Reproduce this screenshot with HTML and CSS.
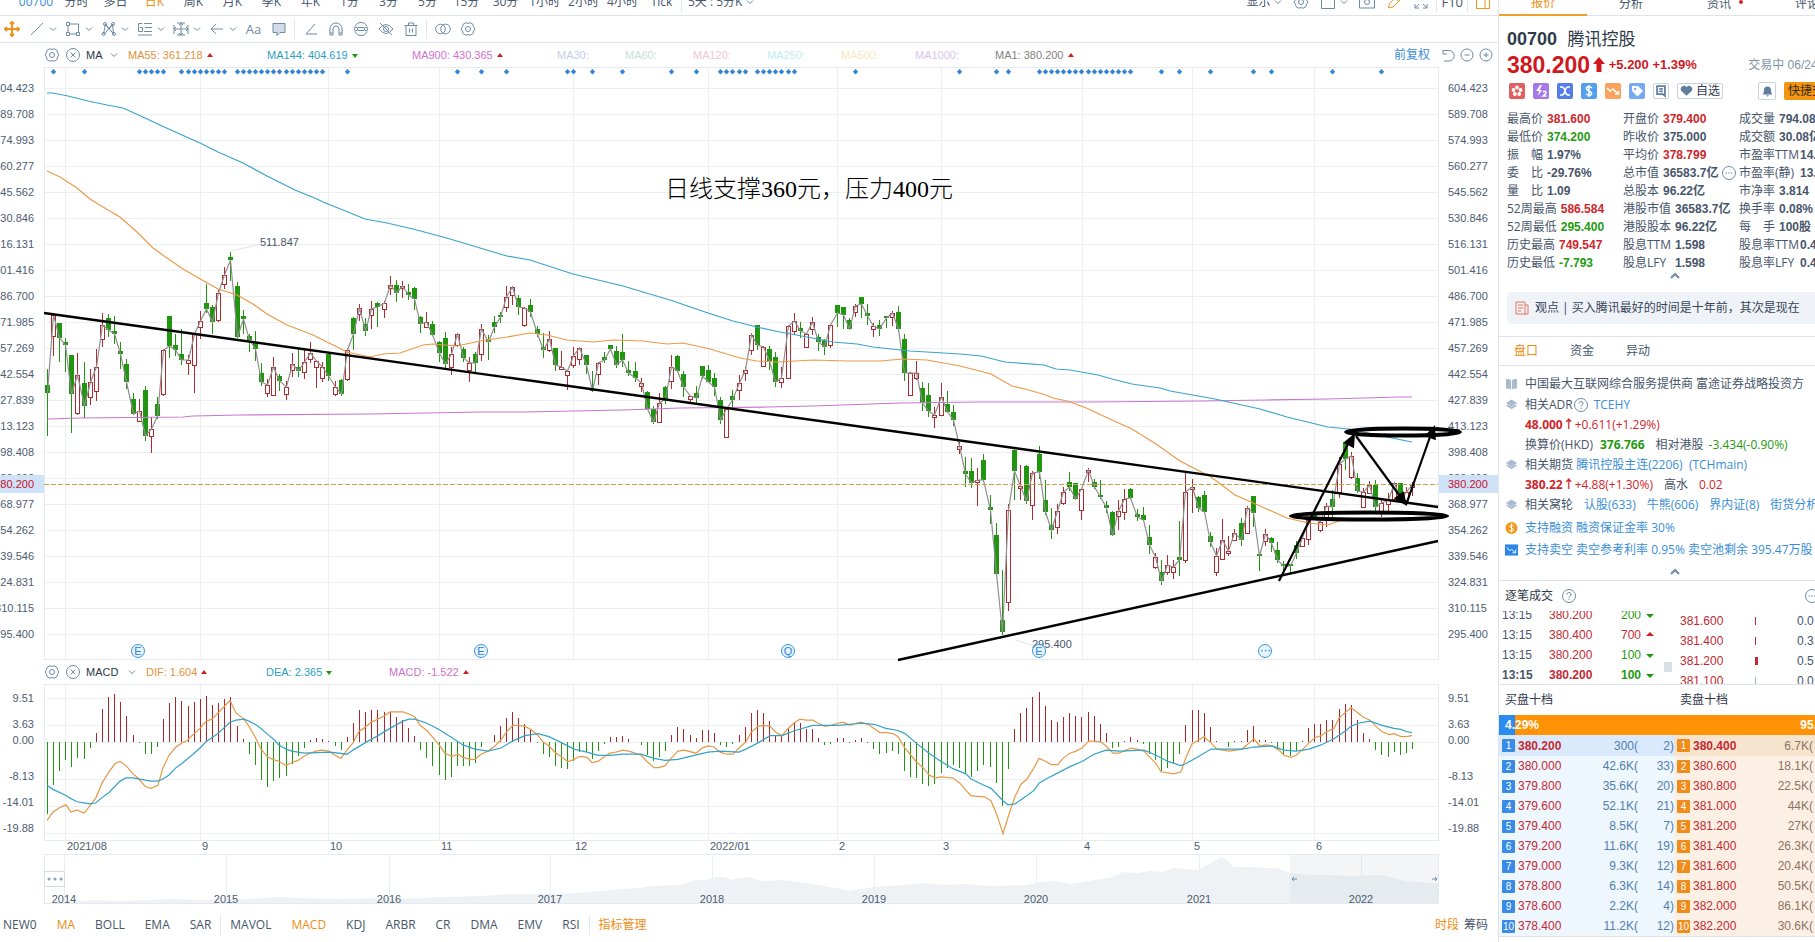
FILE: index.html
```html
<!DOCTYPE html>
<html lang="zh-CN">
<head>
    <meta charset="UTF-8">
    <meta name="viewport" content="width=device-width, initial-scale=1.0">
    <title>00700 腾讯控股</title>
    <link rel="stylesheet" href="styles.css">
</head>
<body>
    <!-- icon sprite -->
    <svg class="sprite" aria-hidden="true">
        <symbol id="chev" viewBox="0 0 8 8"><path d="M1 2.5l3 3 3-3"/></symbol>
        <symbol id="chev-up" viewBox="0 0 10 8"><path d="M1 6l4-4 4 4"/></symbol>
        <symbol id="gear" viewBox="0 0 16 16"><path d="M5.8 1.8Q8 3 10.200 1.800L13 3.400Q13 6 15 8 13 10 13 12.600L10.200 14.200Q8 13 5.800 14.200L3 12.600Q3 10 1 8 3 6 3 3.400Z"/><circle cx="8" cy="8" r="2.500"/></symbol>
        <symbol id="close" viewBox="0 0 16 16"><circle cx="8" cy="8" r="6.500"/><path d="M5.700 5.700l4.600 4.600M10.300 5.700l-4.600 4.600"/></symbol>
        <symbol id="minus" viewBox="0 0 16 16"><circle cx="8" cy="8" r="6"/><path d="M5.500 8h5"/></symbol>
        <symbol id="plus" viewBox="0 0 16 16"><circle cx="8" cy="8" r="6"/><path d="M5.500 8h5M8 5.500v5"/></symbol>
        <symbol id="undo" viewBox="0 0 16 16"><path d="M3 3v4h4M3 3.500h6a5 5 0 0 1 0 10.500H4"/></symbol>
        <symbol id="help" viewBox="0 0 16 16"><circle cx="8" cy="8" r="6.500"/><path d="M6 6.500a2 2 0 1 1 2.800 1.800Q8 8.700 8 9.700M8 11v1"/></symbol>
        <symbol id="more" viewBox="0 0 16 16"><circle cx="8" cy="8" r="6.500"/><path d="M4.500 8h1.500M7.300 8h1.500M10 8h1.500"/></symbol>
        <symbol id="layers" viewBox="0 0 14 14"><path class="fill" d="M7 1l6 3.800-6 3.700-6-3.700z"/><path class="fill" d="M1 7.500l2-1 4 2.500 4-2.500 2 1-6 4z"/></symbol>
    </svg>

    <div class="app">
        <main class="main">
            <nav class="periods">
                <div class="periods-inner">
                    <button class="code">00700</button>
                    <button>分时</button>
                    <button>多日</button>
                    <button class="active">日K</button>
                    <button>周K</button>
                    <button>月K</button>
                    <button>季K</button>
                    <button>年K</button>
                    <button>1分</button>
                    <button>3分</button>
                    <button>5分</button>
                    <button>15分</button>
                    <button>30分</button>
                    <button>1小时</button>
                    <button>2小时</button>
                    <button>4小时</button>
                    <button>Tick</button>
                    <button class="custom">5天 : 5分K <svg class="icon small"><use href="#chev"/></svg></button>
                    <div class="window-tools">
                        <button>显示 <svg class="icon small"><use href="#chev"/></svg></button>
                        <button aria-label="设置"><svg class="icon" viewBox="0 0 16 16"><use href="#gear"/></svg></button>
                        <button aria-label="布局"><svg class="icon" viewBox="0 0 16 16"><path d="M1.500 1.500h13v13h-13z"/></svg> <svg class="icon small"><use href="#chev"/></svg></button>
                        <button aria-label="截图"><svg class="icon" viewBox="0 0 16 16"><path d="M.5 3h15v11H.5zM5 3l1-2h4l1 2"/><circle cx="8" cy="8" r="2.500"/></svg></button>
                        <button aria-label="画线"><svg class="icon orange" viewBox="0 0 16 16"><path d="M2.500 14l1-4.500 8-8 3.500 3.500-8 8zM9 4l3.500 3.500"/></svg></button>
                        <button aria-label="全屏"><svg class="icon" viewBox="0 0 16 16"><path d="M2 10v4h4M2 14l4-4M14 10v4h-4M14 14l-4-4M2 5V1h4M14 5V1h-4"/></svg></button>
                        <button class="f10">F10</button>
                        <button aria-label="侧栏"><svg class="icon orange" viewBox="0 0 16 16"><path d="M1.500 1.500h13v13h-13zM10 1v13"/></svg></button>
                    </div>
                </div>
            </nav>

            <div class="toolbar">
                <button aria-label="移动"><svg class="icon orange bold" viewBox="0 0 16 16"><path d="M8 1v14M1 8h14M6 3l2-2 2 2M6 13l2 2 2-2M3 6L1 8l2 2M13 6l2 2-2 2"/></svg></button>
                <button class="drop" aria-label="线段"><svg class="icon" viewBox="0 0 16 16"><path d="M2 14L14 2"/></svg><svg class="icon small"><use href="#chev"/></svg></button>
                <button class="drop" aria-label="矩形"><svg class="icon" viewBox="0 0 16 16"><path d="M4.500 3h9v8.500M4.500 13h7M3 4.500v7M1.500 1.500h3v3h-3zM11.500 11.500h3v3h-3zM1.500 11.500h3v3h-3z"/></svg><svg class="icon small"><use href="#chev"/></svg></button>
                <button class="drop" aria-label="形态"><svg class="icon" viewBox="0 0 16 16"><path d="M2.500 13l2-10 8 10-1-10-8 10M4 3l4 5 4-5"/><circle cx="4" cy="3" r="1.500"/><circle cx="12" cy="3" r="1.500"/><circle cx="2.500" cy="13" r="1.500"/><circle cx="13" cy="13" r="1.500"/></svg><svg class="icon small"><use href="#chev"/></svg></button>
                <button class="drop" aria-label="斐波那契"><svg class="icon" viewBox="0 0 16 16"><path d="M7 2.500h8M8 6.500h7M7 10.500h8M1 14h14M5.500 2.500H1.500v8h4v-4H3"/></svg><svg class="icon small"><use href="#chev"/></svg></button>
                <button class="drop" aria-label="测量"><svg class="icon" viewBox="0 0 16 16"><path d="M1 4v9M15 4v9M4 2h8M4 14h8M8 2v12M1 8h14M3 6L1 8l2 2M13 6l2 2-2 2M6 4l2-2 2 2M6 12l2 2 2-2"/></svg><svg class="icon small"><use href="#chev"/></svg></button>
                <button class="drop" aria-label="箭头"><svg class="icon" viewBox="0 0 16 16"><path d="M14 8H2M7 3L2 8l5 5"/></svg><svg class="icon small"><use href="#chev"/></svg></button>
                <button class="letters">Aa</button>
                <button class="tool" aria-label="批注"><svg class="icon shaded" viewBox="0 0 16 16"><path d="M2 2.500h12v9H9L6 14.500v-3H2z"/></svg></button>
                <span class="sep"></span>
                <button class="tool" aria-label="角度"><svg class="icon" viewBox="0 0 16 16"><path d="M12 3l-9 10h11"/></svg></button>
                <button class="tool" aria-label="磁铁"><svg class="icon" viewBox="0 0 16 16"><path d="M2 14V8a6 6 0 0 1 12 0v6h-3V8a3 3 0 0 0-6 0v6zM2 12h3M11 12h3"/></svg></button>
                <button class="tool" aria-label="同步"><svg class="icon" viewBox="0 0 16 16"><path d="M2 5.500a6.500 6.500 0 0 1 12 0M2 10.500a6.500 6.500 0 0 0 12 0M5 6.500h6M5 9.500h6"/><circle cx="3" cy="8" r="1.800"/><circle cx="13" cy="8" r="1.800"/></svg></button>
                <button class="tool" aria-label="隐藏"><svg class="icon" viewBox="0 0 16 16"><path d="M1 8q7-9 14 0-7 9-14 0M2 2l12 12"/><circle cx="8" cy="8" r="2.500"/></svg></button>
                <button class="tool" aria-label="删除"><svg class="icon" viewBox="0 0 16 16"><path d="M1.500 4.500h13M3 4.500v10h10v-10M5.500 4V2h5v2M6.500 7.500v4M9.500 7.500v4"/></svg></button>
                <span class="sep"></span>
                <button class="tool" aria-label="对比"><svg class="icon" viewBox="0 0 16 16"><circle cx="5.500" cy="8" r="4.800"/><circle cx="10.500" cy="8" r="4.800"/></svg></button>
                <button class="tool" aria-label="设置"><svg class="icon"><use href="#gear"/></svg></button>
            </div>

            <div class="indicator">
                <svg class="icon"><use href="#gear"/></svg>
                <svg class="icon"><use href="#close"/></svg>
                <span class="ind-name">MA</span>
                <svg class="icon small"><use href="#chev"/></svg>
                <div class="legend ma">
                    <span class="c-orange">MA55: 361.218<i class="tri up"></i></span>
                    <span class="c-cyan">MA144: 404.619<i class="tri down"></i></span>
                    <span class="c-pink">MA900: 430.365<i class="tri up"></i></span>
                    <span class="c-ma30">MA30:</span>
                    <span class="c-ma60">MA60:</span>
                    <span class="c-ma120">MA120:</span>
                    <span class="c-ma250">MA250:</span>
                    <span class="c-ma500">MA500:</span>
                    <span class="c-ma1000">MA1000:</span>
                    <span class="c-gray">MA1: 380.200<i class="tri up"></i></span>
                </div>
                <a class="adjust" href="#">前复权</a>
                <svg class="icon"><use href="#undo"/></svg>
                <svg class="icon"><use href="#minus"/></svg>
                <svg class="icon"><use href="#plus"/></svg>
            </div>

            <section class="chart price-chart">
                <div class="axis left" id="axisLeft"></div>
                <div class="plot" id="pricePlot">
                    <svg id="priceSvg" viewBox="44 67 1394 593" preserveAspectRatio="none"></svg>
                </div>
                <div class="axis right" id="axisRight"></div>
            </section>

            <div class="indicator macd-head">
                <svg class="icon"><use href="#gear"/></svg>
                <svg class="icon"><use href="#close"/></svg>
                <span class="ind-name">MACD</span>
                <svg class="icon small"><use href="#chev"/></svg>
                <div class="legend macd">
                    <span class="c-orange">DIF: 1.604<i class="tri up"></i></span>
                    <span class="c-cyan">DEA: 2.365<i class="tri down"></i></span>
                    <span class="c-pink">MACD: -1.522<i class="tri up"></i></span>
                </div>
            </div>

            <section class="chart macd-chart">
                <div class="axis left">
                    <span>9.51</span><span>3.63</span><span class="zero">0.00</span><span>-8.13</span><span>-14.01</span><span>-19.88</span>
                </div>
                <div class="plot">
                    <svg id="macdSvg" viewBox="44 684 1394 152" preserveAspectRatio="none"></svg>
                </div>
                <div class="axis right">
                    <span>9.51</span><span>3.63</span><span class="zero">0.00</span><span>-8.13</span><span>-14.01</span><span>-19.88</span>
                </div>
            </section>

            <div class="chart dates">
                <div></div>
                <div class="plot" id="months"></div>
            </div>

            <div class="chart navigator">
                <div></div>
                <div class="plot" id="nav">
                    <svg id="navSvg" viewBox="44 854 1394 50" preserveAspectRatio="none"></svg>
                    <button class="nav-more" aria-label="更多"><svg viewBox="0 0 19 14"><circle cx="4" cy="7" r="1.500"/><circle cx="10" cy="7" r="1.500"/><circle cx="16" cy="7" r="1.500"/></svg></button>
                </div>
            </div>

            <footer class="bottom-tabs">
                <button>NEW0</button>
                <button class="active">MA</button>
                <button>BOLL</button>
                <button>EMA</button>
                <button>SAR</button>
                <span class="sep"></span>
                <button>MAVOL</button>
                <button class="active">MACD</button>
                <button>KDJ</button>
                <button>ARBR</button>
                <button>CR</button>
                <button>DMA</button>
                <button>EMV</button>
                <button>RSI</button>
                <span class="sep"></span>
                <button class="active">指标管理</button>
                <div class="right-tabs">
                    <button class="active">时段</button>
                    <button>筹码</button>
                </div>
            </footer>
        </main>

        <aside class="side">
            <div class="side-inner">
                <nav class="side-tabs">
                    <button class="active"><span>报价</span></button>
                    <button><span>分析</span></button>
                    <button><span class="dot">资讯</span></button>
                    <button><span>评论</span></button>
                </nav>

                <header class="quote">
                    <h1><b>00700</b> 腾讯控股</h1>
                    <div class="price-line">
                        <span class="last">380.200</span>
                        <svg class="arrow" viewBox="0 0 12 16"><path d="M6 0l6 7H8.500v8h-5V7H0z"/></svg>
                        <span class="change">+5.200 +1.39%</span>
                        <span class="status">交易中 06/24 13:15</span>
                    </div>
                    <div class="badges">
                        <svg class="b-red" viewBox="0 0 16 16"><circle cx="8" cy="4.500" r="1.900"/><circle cx="11.500" cy="7" r="1.900"/><circle cx="10.200" cy="11" r="1.900"/><circle cx="5.800" cy="11" r="1.900"/><circle cx="4.500" cy="7" r="1.900"/></svg>
                        <svg class="b-purple" viewBox="0 0 16 16"><path d="M7 2L3 8h3l-1 5 4-6H6.500L9 2z"/><path class="line" d="M10 9q3-1.500 3 .500 0 1-3 3.500h3.500"/></svg>
                        <svg class="b-blue" viewBox="0 0 16 16"><path class="line" d="M3 4h2c4 0 2 8 6 8h2M3 12h2c4 0 2-8 6-8h2"/></svg>
                        <svg class="b-sky" viewBox="0 0 16 16"><path class="line" d="M11 5q-3-2.500-5.500-.500Q5 7 8 8t2.500 3.500Q8 13 5 11M8 2v12"/></svg>
                        <svg class="b-orange" viewBox="0 0 16 16"><path class="line" d="M2 5l3 3 3-2 5 5M10 11h3.500V8"/></svg>
                        <svg class="b-light" viewBox="0 0 16 16"><path d="M3 3h6l5 5-5.500 5.500L3 8z"/><circle class="hole" cx="6" cy="6" r="1.200"/></svg>
                        <svg class="b-note" viewBox="0 0 16 16"><path d="M3.500 2.500h9v11L10 11.500H3.500zM6 5.500h4M6 8.500h4"/></svg>
                        <button class="fav"><svg viewBox="0 0 14 12"><path d="M7 11L1.500 6A3 3 0 0 1 7 2a3 3 0 0 1 5.500 4z"/></svg>自选</button>
                        <button class="bell" aria-label="提醒"><svg viewBox="0 0 12 12"><path d="M1 9.500q1.500-1 1.500-4.500a3.500 3.500 0 0 1 7 0Q9.500 8.500 11 9.500zM4.500 10.300h3L6 11.800z"/></svg></button>
                        <button class="trade">快捷交易</button>
                    </div>
                </header>

                <div class="stats" id="stats"></div>
                <button class="fold" aria-label="收起"><svg class="icon"><use href="#chev-up"/></svg></button>

                <a class="banner" href="#"><svg viewBox="0 0 14 14"><path d="M1 1h9v12H1zM10 4h3v9h-3M3 4h5M3 7h5M3 10h3"/></svg>观点 | 买入腾讯最好的时间是十年前，其次是现在</a>

                <nav class="sub-tabs">
                    <button class="active">盘口</button>
                    <button>资金</button>
                    <button>异动</button>
                </nav>

                <ul class="info">
                    <li class="first"><svg viewBox="0 0 14 14"><path class="fill" d="M1 2q3-1 5.500 1v10Q4 11.500 1 12zM13 2q-3-1-5.500 1v10q2.500-1.500 5.500-1z"/></svg>中国最大互联网综合服务提供商 富途证券战略投资方</li>
                    <li><svg><use href="#layers"/></svg>相关ADR<svg class="icon"><use href="#help"/></svg><a class="near" href="#">TCEHY</a></li>
                    <li class="indent red"><b>48.000↑</b>+0.611(+1.29%)</li>
                    <li class="indent">换算价(HKD)<b class="green mid">376.766</b><span class="wide">相对港股</span><span class="green near">-3.434(-0.90%)</span></li>
                    <li><svg><use href="#layers"/></svg>相关期货 <a href="#">腾讯控股主连(2206)&nbsp; (TCHmain)</a></li>
                    <li class="indent red"><b>380.22↑</b>+4.88(+1.30%)<span class="wide dark">高水</span><span class="wide">0.02</span></li>
                    <li><svg><use href="#layers"/></svg>相关窝轮<a class="wide" href="#">认股(633)</a><a class="wide" href="#">牛熊(606)</a><a class="wide" href="#">界内证(8)</a><a class="wide" href="#">街货分析</a></li>
                    <li class="tall"><svg viewBox="0 0 14 14"><circle class="coin" cx="7" cy="7" r="6.500"/><path class="white" d="M9.500 5Q8 3.500 6 4.300 4 6 7 7t2 2.700Q7 11 4.500 9.500M7 2v10"/></svg><a href="#">支持融资 融资保证金率 30%</a></li>
                    <li><svg viewBox="0 0 14 14"><path class="box" d="M0 1h14v12H0z"/><path class="white" d="M2 4l3 4 2-2 4 4M8 10h3.500V6.500"/></svg><a href="#">支持卖空 卖空参考利率 0.95% 卖空池剩余 395.47万股</a></li>
                </ul>
                <button class="fold info-fold" aria-label="收起"><svg class="icon"><use href="#chev-up"/></svg></button>

                <h2 class="tick-title">逐笔成交 <svg class="icon"><use href="#help"/></svg><svg class="icon last-icon"><use href="#more"/></svg></h2>
                <div class="ticks">
                    <table class="tick-list">
                        <tr><td>13:15</td><td class="p">380.200</td><td class="q">200</td><td><i class="tri down"></i></td></tr>
                        <tr><td>13:15</td><td class="p">380.400</td><td class="q rise">700</td><td><i class="tri up"></i></td></tr>
                        <tr><td>13:15</td><td class="p">380.200</td><td class="q">100</td><td><i class="tri down"></i></td></tr>
                        <tr class="latest"><td>13:15</td><td class="p">380.200</td><td class="q">100</td><td><i class="tri down"></i></td></tr>
                    </table>
                    <span class="thumb"></span>
                    <table class="level-list">
                        <tr><td class="p">381.600</td><td><i class="vol"></i></td><td>0.0</td></tr>
                        <tr><td class="p">381.400</td><td><i class="vol"></i></td><td>0.3</td></tr>
                        <tr><td class="p">381.200</td><td><i class="vol big"></i></td><td>0.5</td></tr>
                        <tr><td class="p">381.100</td><td><i class="vol flat"></i></td><td>0.0</td></tr>
                    </table>
                </div>

                <div class="depth-head"><span>买盘十档</span><span>卖盘十档</span></div>
                <div class="ratio"><span class="buy"></span><b>4.29%</b><b class="sell">95.71%</b></div>
                <div class="depth">
                    <table class="bids" id="bids"></table>
                    <table class="asks" id="asks"></table>
                </div>
            </div>
        </aside>
    </div>

    <script src="script.js"></script>
</body>
</html>
```
FILE: styles.css
```css
* {
    box-sizing: border-box;
}

body {
    margin: 0;
    font-family: "Open Sans", "Noto Sans CJK SC", sans-serif;
    font-size: 12px;
    line-height: 20px;
    color: #47566b;
    background: #fff;
}

button {
    padding: 0;
    border: none;
    background: none;
    font: inherit;
    color: inherit;
    white-space: nowrap;
    cursor: pointer;
}

a {
    color: #3a8ed6;
    text-decoration: none;
}

table {
    border-collapse: collapse;
}

td {
    padding: 0;
}

.sprite {
    display: none;
}

.icon {
    width: 16px;
    height: 16px;
    fill: none;
    stroke: #6f8aa5;
    stroke-width: 1;
    flex: none;
}

.icon.small {
    width: 8px;
    height: 8px;
}

.icon.orange {
    stroke: #f0931a;
}

.icon.bold {
    stroke-width: 2;
}

.icon.shaded {
    fill: #d3dce8;
}

.active {
    color: #ee8d13;
}

.red {
    color: #d0262b;
}

.green {
    color: #1f9a10;
}

.app {
    display: flex;
    min-height: 100vh;
    overflow: hidden;
}

.main {
    flex: 1;
    min-width: 0;
}

/* top period bar, scrolled half out of view */
.periods {
    height: 16px;
    overflow: hidden;
    border-bottom: 1px solid #dfe4ea;
}

.periods-inner {
    display: flex;
    height: 28px;
    margin-top: -12px;
    padding-left: 15px;
    align-items: center;
}

.periods-inner > button {
    width: 39px;
    flex: none;
}

.periods-inner > .code {
    width: 42px;
    color: #3a8ed6;
}

.periods-inner > .custom {
    width: auto;
    padding-left: 6px;
    border-left: 1px solid #e3e7ec;
}

.window-tools {
    display: flex;
    gap: 11px;
    margin-left: auto;
    padding-right: 7px;
}

.window-tools button {
    display: flex;
    align-items: center;
    gap: 4px;
}

.window-tools .f10 {
    margin: 0 -4px;
    padding: 0 4px;
    border-left: 1px solid #e3e7ec;
    border-right: 1px solid #e3e7ec;
    font-size: 13px;
}

.toolbar {
    display: flex;
    align-items: center;
    height: 27px;
    padding-left: 4px;
    border-bottom: 1px solid #dfe4ea;
}

.toolbar button {
    display: flex;
    align-items: center;
    justify-content: center;
}

.toolbar .drop {
    width: 36px;
    gap: 4px;
}

.toolbar button:first-child {
    margin-right: 5px;
}

.toolbar .letters {
    width: 25px;
    font-size: 13px;
    color: #6f8aa5;
}

.toolbar .tool {
    width: 25px;
}

.sep {
    width: 1px;
    height: 20px;
    margin: 0 3px;
    background: #e3e7ec;
}

/* indicator header rows */
.indicator {
    display: flex;
    align-items: center;
    height: 24px;
    padding: 0 1px 0 44px;
    font-family: "Liberation Sans", "Noto Sans CJK SC", sans-serif;
    font-size: 11px;
}

.indicator .icon {
    margin-right: 5px;
}

.indicator .icon.small {
    margin-right: 10px;
}

.indicator .adjust ~ .icon {
    margin-right: 3px;
}

.ind-name {
    width: 24px;
    color: #2b3747;
}

.macd-head .ind-name {
    width: 42px;
}

.legend {
    display: grid;
    flex: 1;
    white-space: nowrap;
}

.legend.ma {
    grid-template-columns: 139px 145px 145px 68px 68px 74px 74px 74px 80px 1fr;
}

.legend.macd {
    grid-template-columns: 120px 123px 1fr;
}

.adjust {
    margin-right: 10px;
    font-size: 12px;
}

.tri {
    display: inline-block;
    margin-left: 4px;
    vertical-align: middle;
    border: 3px solid transparent;
}

.tri.up {
    margin-bottom: 3px;
    border-top: none;
    border-bottom: 4px solid #cc2020;
}

.tri.down {
    border-bottom: none;
    border-top: 4px solid #1f9a10;
}

.c-orange { color: #e2913a; }
.c-cyan { color: #2c9fc0; }
.c-pink { color: #d070cf; }
.c-ma30 { color: #c5cfe9; }
.c-ma60 { color: #bfe3d0; }
.c-ma120 { color: #f5c6cb; }
.c-ma250 { color: #bdeeee; }
.c-ma500 { color: #f6e8bc; }
.c-ma1000 { color: #d9c2ef; }
.c-gray { color: #857f7c; }

/* charts */
.chart {
    display: grid;
    grid-template-columns: 44px 1fr 60px;
    font-family: "Liberation Sans", sans-serif;
    font-size: 11px;
}

.plot {
    position: relative;
    z-index: 1;
    min-width: 0;
}

.plot > svg {
    display: block;
    position: absolute;
    width: 100%;
    height: 100%;
    overflow: visible;
}

.axis {
    display: flex;
    position: relative;
    flex-direction: column;
    line-height: 26px;
    color: #4d5c70;
}

.axis.left {
    align-items: flex-end;
    padding-right: 10px;
}

.axis.right {
    padding-left: 10px;
}

.price-chart .axis {
    padding-top: 8px;
    padding-bottom: 13px;
}

.price-tag {
    position: absolute;
    top: 408px;
    left: 0;
    right: 0;
    display: flex;
    justify-content: flex-end;
    height: 18px;
    padding: 0 10px;
    line-height: 18px;
    color: #c8102e;
    background: #cfe2f8;
}

.right .price-tag {
    justify-content: flex-start;
}

.mark {
    position: absolute;
    line-height: 14px;
    white-space: nowrap;
    transform: translateY(-50%);
}

.note {
    font-family: "Liberation Serif", "Noto Sans CJK SC", serif;
    font-size: 24px;
    font-weight: 300;
    line-height: 32px;
    color: #000;
}

.event {
    width: 14px;
    height: 14px;
    margin-left: -7px;
    border: 1px solid #3b95dc;
    border-radius: 50%;
    line-height: 12px;
    text-align: center;
    color: #2c86d0;
    background: #e6f4fe;
}

.macd-chart {
    height: 152px;
}

.macd-chart .axis {
    padding-top: 1px;
}

.axis .zero {
    margin-bottom: 20px;
    line-height: 6px;
}

.dates {
    height: 18px;
    color: #4d5c70;
}

.dates .mark {
    margin-left: 2px;
}

.navigator {
    height: 50px;
    color: #4d5c70;
}

.navigator .mark {
    transform: translate(-50%, -50%);
}

.nav-more {
    position: absolute;
    top: 17px;
    left: 0;
    width: 21px;
    height: 16px;
    border: 1px solid #d3dae2;
    background: #fff;
}

.nav-more svg {
    display: block;
    fill: #8ea1b5;
}

.bottom-tabs {
    display: flex;
    align-items: center;
    height: 38px;
    padding: 4px 10px 0 3px;
    gap: 20px;
}

.bottom-tabs .sep {
    margin: 0 -11px;
}

.right-tabs {
    display: flex;
    gap: 5px;
    margin-left: auto;
}

/* quote panel, wider than what the window shows */
.side {
    flex: 0 0 317px;
    overflow: hidden;
    border-left: 1px solid #dfe4ea;
}

.side-inner {
    width: 352px;
}

.side-tabs {
    display: flex;
    height: 16px;
    border-bottom: 1px solid #dfe4ea;
}

.side-tabs button {
    flex: 1;
    height: 16px;
    overflow: hidden;
}

.side-tabs .active {
    border-bottom: 2px solid #eea02e;
}

.side-tabs span {
    display: block;
    margin-top: -8px;
}

.side-tabs .dot::after {
    content: "";
    display: inline-block;
    width: 4px;
    height: 4px;
    margin: 0 -12px 4px 8px;
    border-radius: 50%;
    background: #d0262b;
}

.quote {
    padding: 11px 0 0 8px;
}

.quote h1 {
    margin: 0;
    font-size: 17px;
    font-weight: 400;
    line-height: 24px;
    color: #2f3a4a;
}

.quote h1 b {
    margin-right: 6px;
    font-family: "Liberation Sans", sans-serif;
    font-size: 18px;
}

.price-line {
    display: flex;
    align-items: center;
    height: 28px;
    font-family: "Liberation Sans", "Noto Sans CJK SC", sans-serif;
    color: #d0181e;
}

.last {
    width: 86px;
    font-size: 23px;
    font-weight: 700;
}

.arrow {
    width: 12px;
    height: 16px;
    margin-right: 4px;
    fill: #d0181e;
}

.change {
    width: 140px;
    font-size: 13px;
    font-weight: 700;
}

.status {
    white-space: nowrap;
    color: #8392a5;
}

.badges {
    display: flex;
    align-items: center;
    gap: 8px;
    height: 24px;
    padding-left: 2px;
}

.badges > svg {
    width: 16px;
    height: 16px;
    flex: none;
    border-radius: 2px;
    fill: #fff;
}

.badges .line {
    fill: none;
    stroke: #fff;
    stroke-width: 1.5;
}

.badges .b-red { background: #e0605f; }
.badges .b-purple { background: #a679e8; }
.badges .b-blue { background: #557de8; }
.badges .b-sky { background: #55a0ee; }
.badges .b-orange { background: #fba35c; }
.badges .b-light { background: #75aaf0; }

.badges .hole {
    fill: #75aaf0;
}

.badges .b-note {
    border: 1px solid #c9d2dc;
    fill: none;
    stroke: #5f7f9f;
    stroke-width: 2;
}

.fav,
.bell {
    display: flex;
    align-items: center;
    justify-content: center;
    gap: 3px;
    width: 46px;
    height: 16px;
    border: 1px solid #c9d2dc;
    border-radius: 2px;
    color: #2f3a4a;
}

.fav svg,
.bell svg {
    width: 13px;
    height: 12px;
    fill: #5f7f9f;
}

.bell {
    width: 18px;
    height: 18px;
    margin-left: 27px;
}

.trade {
    height: 18px;
    padding: 0 4px;
    border-radius: 2px;
    line-height: 18px;
    color: #3a2c14;
    background: #f39412;
}

.stats {
    display: grid;
    grid-template-columns: 116px 116px 1fr;
    grid-auto-rows: 18px;
    padding: 7px 0 0 8px;
    line-height: 18px;
    white-space: nowrap;
}

.stats div {
    display: flex;
    align-items: center;
}

.stats span {
    min-width: 36px;
    margin-right: 4px;
}

.stats b {
    font-family: "Liberation Sans", "Noto Sans CJK SC", sans-serif;
}

.stats .wide {
    min-width: 48px;
}

.stats .wider {
    min-width: 60px;
    margin-right: 1px;
}

.stats .icon {
    margin-left: 3px;
}

.fold {
    display: flex;
    justify-content: center;
    width: 100%;
    height: 20px;
}

.fold .icon {
    width: 10px;
    height: 8px;
    stroke-width: 2;
}

.banner {
    display: flex;
    align-items: center;
    height: 32px;
    margin: 0 0 12px 8px;
    padding-left: 8px;
    border-radius: 4px;
    color: #36455a;
    background: #eff2f6;
}

.banner svg {
    width: 14px;
    height: 14px;
    margin-right: 6px;
    fill: none;
    stroke: #e8745f;
}

.sub-tabs {
    display: flex;
    gap: 32px;
    height: 30px;
    padding-left: 15px;
    border-top: 1px solid #dfe4ea;
    border-bottom: 1px solid #dfe4ea;
}

.info {
    margin: 0;
    padding: 7px 0 0 6px;
    list-style: none;
    white-space: nowrap;
}

.info li {
    display: flex;
    align-items: center;
    height: 20px;
    white-space: pre;
}

.info .first {
    height: 22px;
}

.info .tall {
    height: 25px;
}

.info svg:first-child {
    width: 13px;
    height: 14px;
    margin-right: 7px;
    flex: none;
}

.info .indent {
    padding-left: 20px;
}

.info .near {
    margin-left: 5px;
}

.info .mid {
    margin-left: 7px;
}

.info .wide {
    margin-left: 11px;
}

.info .dark {
    color: #47566b;
}

.fill {
    fill: #a9bad0;
}

.coin {
    fill: #f39a1e;
}

.box {
    fill: #2c86e8;
}

.white {
    fill: none;
    stroke: #fff;
}

.info-fold {
    height: 21px;
    padding-top: 8px;
    border-bottom: 1px solid #dfe4ea;
}

.tick-title {
    display: flex;
    align-items: center;
    height: 30px;
    margin: 0;
    padding-left: 6px;
    font-size: 12px;
    font-weight: 400;
    color: #2f3a4a;
}

.tick-title .icon {
    margin-left: 8px;
}

.tick-title .last-icon {
    margin-left: 227px;
}

.ticks {
    display: flex;
    height: 74px;
    overflow: hidden;
    border-bottom: 1px solid #dfe4ea;
    font-family: "Liberation Sans", sans-serif;
}

.ticks td {
    height: 20px;
}

.ticks .tri {
    border-left-width: 4px;
    border-right-width: 4px;
    margin-left: 5px;
}

.tick-list {
    width: 162px;
    margin: -6px 0 0 3px;
    table-layout: fixed;
}

.tick-list td:nth-child(1) { width: 47px; }
.tick-list td:nth-child(2) { width: 60px; }
.tick-list td:nth-child(3) { width: 32px; }

.ticks .p {
    color: #c22a33;
}

.ticks .q {
    text-align: right;
    color: #1f9a10;
}

.ticks .rise {
    color: #c22a33;
}

.tick-list .latest {
    font-weight: 700;
}

.thumb {
    width: 8px;
    height: 10px;
    margin: 51px 8px 0 0;
    background: #d8dfe7;
}

.level-list {
    width: 150px;
    table-layout: fixed;
}

.level-list td:nth-child(1) { width: 75px; }
.level-list td:nth-child(2) { width: 42px; }

.vol {
    display: block;
    width: 1px;
    height: 8px;
    background: #c22a33;
}

.vol.big {
    width: 3px;
}

.vol.flat {
    background: #a9b3be;
}

.depth-head {
    display: grid;
    grid-template-columns: 175px 1fr;
    height: 30px;
    padding-left: 6px;
    line-height: 30px;
    color: #2f3a4a;
}

.ratio {
    display: flex;
    justify-content: space-between;
    position: relative;
    height: 20px;
    padding: 0 10px 0 6px;
    font-family: "Liberation Sans", sans-serif;
    color: #fff;
    background: #ff9305;
}

.ratio b {
    position: relative;
}

.ratio .buy {
    position: absolute;
    left: 0;
    top: 0;
    width: 16px;
    height: 20px;
    background: #2c8bf0;
}

.depth {
    display: grid;
    grid-template-columns: 175px 1fr;
    border-bottom: 1px solid #dfe4ea;
    font-family: "Liberation Sans", sans-serif;
}

.depth table {
    width: 100%;
    table-layout: fixed;
}

.depth td {
    height: 20px;
    text-align: right;
}

.depth tr:first-child td {
    height: 21px;
}

.depth td:nth-child(1) { width: 19px; }
.depth td:nth-child(2) { width: 60px; }
.depth td:nth-child(3) { width: 60px; }

.depth .p {
    text-align: left;
    color: #c22a33;
}

.depth tr:first-child .p {
    font-weight: 700;
}

.depth i {
    display: block;
    width: 13px;
    height: 13px;
    margin-left: 3px;
    border-radius: 1px;
    font-size: 10px;
    font-style: normal;
    line-height: 13px;
    text-align: center;
    color: #fff;
}

.bids {
    color: #5180ad;
    background: #eef6fe;
}

.bids tr:first-child {
    background: #daeafc;
}

.bids i {
    background: #3a8be8;
}

.asks {
    color: #8f7261;
    background: #fcf0e4;
}

.asks tr:first-child {
    background: #f7e4ce;
}

.asks i {
    background: #f08c1c;
}
```
FILE: script.js
```js
// plot geometry: charts share one horizontal scale, 44..1438
const X0 = 44, WIDTH = 1394;
const barX = i => Math.floor(47.3 + 6.122 * i);

// wick top, body top, body bottom, wick bottom, 1 = fell / 0 = rose
const candles = `369,385,393,436,1 313,315,336,356,0 323,323,338,362,1 338,342,345,372,1 355,355,394,433,1 353,375,413,415,0 362,383,406,418,1 369,382,397,405,0
349,367,391,401,0 313,325,339,347,0 314,318,330,337,1 316,331,334,344,1 342,351,354,369,1 359,364,382,389,1 393,399,414,415,1 399,411,421,422,0
386,390,436,441,1 417,429,436,453,0 397,404,416,419,1 349,350,394,396,0 316,316,346,358,1 334,345,350,356,1 329,354,360,365,1 355,360,363,375,0
333,334,365,393,0 311,321,327,339,0 284,303,309,313,1 305,307,322,334,1 290,293,320,322,0 267,275,284,289,0 252,257,260,281,1 282,286,337,338,1
310,316,319,334,1 334,336,340,352,1 331,342,349,361,1 363,373,382,386,1 379,385,393,397,0 357,367,395,396,0 374,376,381,391,1 381,387,394,400,0
353,364,370,377,0 347,367,371,377,1 349,362,372,379,0 342,353,359,363,0 360,361,367,388,0 362,367,378,382,0 353,354,376,381,1 381,387,394,396,0
379,380,394,396,1 348,350,379,381,0 317,318,334,350,1 304,308,314,321,0 318,324,331,336,1 301,309,315,329,0 302,303,307,327,1 301,303,309,318,0
276,285,288,295,0 280,285,293,302,1 281,286,288,298,0 284,292,295,300,1 287,288,299,310,1 316,317,324,333,1 312,322,327,328,0 321,324,335,336,1
341,342,353,362,1 332,338,364,370,1 347,354,367,375,0 333,334,345,347,0 347,349,358,362,1 357,363,370,382,0 352,354,363,372,1 324,329,354,361,0
335,339,342,360,1 316,322,327,333,1 312,315,317,323,1 286,297,307,312,0 286,287,295,305,0 295,298,307,315,1 307,308,325,327,0 299,305,312,317,1
326,329,334,337,1 333,347,350,358,1 331,339,350,352,0 348,348,365,371,1 351,367,369,370,0 370,371,375,390,0 347,356,365,368,0 347,348,359,365,0
355,355,365,374,1 371,389,391,392,1 362,363,374,385,0 352,357,360,363,1 345,345,349,351,1 346,351,365,368,1 334,352,360,367,1 361,370,373,376,1
362,371,378,382,1 378,383,386,392,0 391,392,409,410,1 406,409,422,424,1 393,403,422,423,0 386,387,399,404,1 355,367,381,389,0 355,356,371,372,1
371,374,387,397,1 396,396,399,404,0 386,393,398,403,1 366,366,376,379,1 365,370,382,382,1 373,378,387,396,1 397,400,420,424,1 408,409,437,438,0
390,396,400,407,1 375,383,390,400,0 367,370,373,381,0 333,335,350,355,0 325,325,345,350,1 346,347,366,367,0 346,349,361,370,1 352,357,382,387,1
367,378,382,388,0 325,326,378,379,0 313,321,331,335,0 322,328,331,338,1 333,334,347,348,0 317,322,329,335,0 334,337,342,351,1 339,340,347,355,1
324,325,345,348,0 305,305,313,327,1 307,307,315,329,1 318,320,329,330,1 304,306,312,317,0 297,297,304,318,1 304,313,316,325,1 323,326,329,337,0
320,325,329,336,1 316,316,318,328,1 311,313,317,326,0 306,312,329,332,1 334,339,373,381,1 372,373,395,396,0 361,373,378,380,0 382,388,403,411,1
383,395,411,417,1 407,415,417,428,0 383,397,415,416,0 391,404,412,413,1 405,412,420,426,1 442,446,449,454,0 457,471,474,487,1 458,471,483,488,1
468,480,482,506,0 454,460,480,482,1 495,507,510,524,1 523,535,574,574,1 570,620,632,635,1 504,510,602,611,0 449,450,471,500,1 465,486,488,500,0
465,466,501,504,1 471,473,505,520,0 446,454,472,479,1 480,500,512,515,1 508,525,530,539,1 504,511,527,534,0 487,492,503,505,0 472,482,487,491,1
483,483,499,500,1 488,489,510,520,0 468,470,472,482,0 479,482,487,489,1 480,495,497,499,1 501,505,508,513,1 511,512,535,536,1 500,511,516,530,0
489,499,512,520,0 488,489,498,499,1 509,514,517,521,1 507,515,520,520,1 525,537,545,554,1 553,557,567,569,0 560,572,581,585,1 555,565,572,575,0
560,567,572,579,0 521,557,560,576,1 472,492,560,563,0 479,487,489,513,0 496,497,508,512,1 491,495,512,512,1 532,536,542,547,1 548,556,572,576,0
519,540,559,560,0 536,551,553,556,0 529,533,540,541,0 518,523,540,546,1 506,508,533,534,0 496,496,513,527,1 553,554,556,571,1 529,534,541,546,0
537,538,543,552,1 542,550,560,563,1 561,564,566,572,1 564,564,566,574,1 541,545,553,559,1 537,538,546,547,0 518,520,539,545,0 512,514,519,520,1
517,522,530,532,0 503,506,518,527,0 490,499,507,518,1 457,464,492,498,0 441,442,459,470,1 452,456,477,479,0 473,478,491,493,1 488,492,507,508,0
481,485,493,494,0 480,485,507,511,1 499,503,513,517,0 493,500,504,513,0 483,483,499,500,0 483,483,499,503,1 487,492,500,504,0 482,484,487,496,0`
    .split(/\s+/).map(c => c.split(',').map(Number));

const ma144 = '47,93 53,93 68,96 88,101 107,105 123,108 143,117 162,126 182,135 200,143 218,152 243,163 267,176 295,190 317,199 323,202 348,212 365,219 387,223 413,229 443,237 467,244 480,248 507,256 530,260 573,274 623,286 653,295 670,300 708,313 733,321 757,327 780,332 807,337 833,342 857,344 873,347 910,351 960,354 981,356 1005,362 1044,365 1056,369 1070,370 1098,375 1112,379 1132,384 1160,388 1170,391 1215,399 1260,409 1287,417 1328,427 1349,429 1373,434 1387,437 1412,442';
const ma55 = '47,171 60,177 77,188 90,199 103,207 120,217 137,232 153,248 167,258 183,269 202,280 218,289 237,295 253,304 267,314 287,325 300,330 313,335 347,352 370,357 383,354 400,353 423,345 433,344 457,346 480,341 507,337 530,333 547,335 567,340 593,342 613,340 643,341 667,344 683,343 710,349 740,358 757,361 777,362 813,360 847,361 880,361 903,359 927,360 960,366 991,374 1012,386 1025,389 1046,395 1053,398 1067,401 1084,407 1112,420 1132,429 1156,444 1180,461 1211,477 1235,495 1260,506 1287,518 1308,523 1328,525 1339,521 1370,519 1412,518';
const ma900 = '47,419 80,418 183,417 193,416 240,415 367,414 427,413 480,412 523,412 623,410 680,408 767,407 813,406 900,403 980,402 1087,402 1201,401 1266,400 1328,399 1363,398 1401,397 1412,397';

const notices = [1, 6, 15, 16, 17, 18, 19, [22, 29], [31, 45], 49, 67, 71, 75, 85, 86, 89, 94, 102, 106, [110, 114], [116, 122], 132, 149, 155, 157, [162, 177], 182, 185, 190, 197, 200, 210, 218];

const monthLines = { 65: '2021/08', 200: '9', 328: '10', 439: '11', 573: '12', 708: '2022/01', 837: '2', 941: '3', 1082: '4', 1192: '5', 1314: '6' };

const hist = [70, 42, 28, 18, 24, 16, 17, 6, -9, -32, -43, -46, -39, -25, -7, 1, 12, 12, 5, -22, -38, -43, -40, -35, -39, -41, -44, -36, -38, -41, -43, -15, -3, 12, 22, 37, 44, 38, 35, 33, 21, 14, 6, -2, -4, -3, -1, 4, 8, -5, -18, -31, -29, -31, -31, -29, -29, -24, -21, -13, -6, 8, 16, 23, 32, 37, 34, 23, 23, 23, 20, 5, 0, -7, -15, -23, -29, -23, -17, -11, 1, 12, 15, 23, 25, 26, 19, 10, 10, 17, 9, 2, -5, -5, -6, -3, 0, 3, 13, 19, 15, 9, -7, -14, -12, -7, -4, -11, -11, -9, 3, 5, 2, -7, -14, -28, -31, -28, -20, -6, -7, -12, -19, -18, -12, -12, -4, 3, 2, -4, -4, 1, -2, -4, 1, 7, 12, 11, 9, 12, 28, 34, 35, 41, 43, 41, 30, 25, 22, 25, 30, 34, 28, 22, 24, 40, 62, 26, -12, -28, -33, -43, -48, -35, -21, -19, -24, -28, -25, -24, -29, -25, -17, -9, 6, 5, -1, -5, -2, 2, 12, 18, 28, 25, 21, 12, -16, -31, -31, -28, -14, -1, 0, 5, -1, -1, -11, -15, -2, -2, 1, 7, 13, 14, 9, -1, -13, -17, -17, -21, -21, -32, -37, -36, -21, -9, -3, 8, 13, 15, 10, 13, 11, 7];

const dif = '47,816 53,808 59,804 66,801 71,808 77,806 84,809 90,802 96,794 102,780 109,769 115,761 120,759 126,763 133,771 138,775 145,783 151,785 158,782 163,765 169,753 176,745 182,741 187,739 193,733 200,727 206,720 212,718 218,712 224,706 230,700 236,712 244,718 249,725 255,735 261,747 268,755 273,757 279,759 286,763 292,760 298,758 304,754 310,751 316,749 322,748 329,749 335,753 341,756 347,748 353,741 359,730 365,726 371,721 378,718 384,715 390,711 403,711 409,713 415,716 420,724 427,729 433,736 439,743 445,751 452,754 458,752 463,755 470,757 475,757 481,752 488,749 495,744 501,738 506,731 513,724 519,724 525,725 531,728 538,734 543,740 549,744 555,750 562,755 568,759 574,757 580,754 587,755 592,760 598,759 605,754 610,751 616,750 623,748 629,749 635,751 641,753 647,759 654,765 659,765 665,763 672,755 678,749 684,748 696,751 702,746 708,744 714,745 720,750 727,752 733,752 739,746 746,740 751,731 758,725 764,724 770,725 776,731 782,734 788,727 795,721 800,718 806,719 813,719 818,722 825,725 831,724 838,722 843,721 850,724 856,722 861,721 868,723 874,727 880,731 886,731 893,732 898,735 905,746 911,753 916,759 923,765 929,772 935,775 941,774 953,775 960,780 966,787 971,792 979,793 984,793 991,797 997,811 1003,829 1008,813 1015,793 1021,781 1027,776 1034,765 1039,756 1046,759 1051,762 1058,762 1063,756 1070,751 1076,749 1082,746 1089,739 1101,740 1106,744 1113,751 1119,751 1126,748 1131,746 1137,747 1144,749 1150,755 1156,761 1161,769 1174,771 1181,769 1186,755 1192,742 1199,738 1204,735 1211,741 1217,747 1229,749 1236,748 1242,747 1248,742 1254,737 1260,744 1266,743 1272,744 1279,748 1284,753 1291,755 1296,753 1302,748 1309,741 1315,736 1321,734 1327,730 1334,727 1339,717 1346,711 1351,707 1358,712 1363,716 1370,719 1377,726 1382,730 1389,733 1394,732 1401,735 1406,735 1412,734';
const dea = '47,782 53,786 66,792 71,795 77,798 84,799 90,800 96,799 102,794 109,789 115,783 120,778 126,775 133,775 145,777 151,778 158,778 163,776 169,772 176,765 182,761 193,752 200,746 206,740 218,732 230,721 236,719 244,718 249,720 255,723 261,727 268,733 273,737 279,743 286,747 292,749 304,751 330,750 347,752 353,748 365,741 378,734 390,727 403,720 409,718 415,718 427,722 439,728 452,736 463,743 475,747 488,749 501,746 513,739 525,734 538,732 549,735 562,741 574,747 587,750 598,753 610,753 623,752 641,752 654,756 665,758 678,757 690,754 708,750 720,749 739,750 746,747 758,741 770,734 782,734 795,729 813,724 838,724 861,722 874,723 886,727 898,729 905,732 916,741 929,751 941,759 953,766 966,771 971,776 984,782 991,785 997,791 1003,797 1008,801 1015,800 1021,796 1027,792 1034,787 1039,780 1046,776 1058,770 1070,764 1082,759 1094,752 1106,748 1119,749 1144,748 1156,753 1168,759 1181,763 1186,761 1199,754 1211,747 1242,747 1254,745 1272,744 1284,748 1296,749 1309,747 1321,743 1334,737 1346,729 1351,725 1358,722 1370,720 1382,724 1394,727 1401,728 1406,730 1412,731';

const history = '44,903 80,901 95,900 120,901 150,900 170,899 200,900 240,899 280,897 300,898 340,899 380,898 400,899 440,897 480,896 510,894 550,894 580,893 610,890 640,888 650,886 680,885 695,880 705,880 715,877 725,877 731,880 740,878 747,877 764,881 783,880 807,883 836,888 848,891 874,887 903,885 924,883 946,885 965,884 993,886 1027,885 1041,882 1056,881 1070,884 1094,880 1113,877 1123,872 1137,873 1151,871 1161,872 1175,868 1199,870 1211,863 1221,857 1228,861 1233,867 1252,867 1266,868 1278,868 1290,873 1314,875 1328,875 1347,876 1381,875 1405,881 1429,883 1438,883';
const years = { 64: '2014', 226: '2015', 389: '2016', 550: '2017', 712: '2018', 874: '2019', 1036: '2020', 1199: '2021', 1361: '2022' };

const rect = (x, y, w, h, fill) => `<rect x="${x}" y="${y}" width="${w}" height="${h}" fill="${fill}" shape-rendering="crispEdges"/>`;
const poly = (points, color) => `<polyline points="${points}" fill="none" stroke="${color}" stroke-width="1.2"/>`;
const stroke = (x1, y1, x2, y2, w) => `<line x1="${x1}" y1="${y1}" x2="${x2}" y2="${y2}" stroke="#000" stroke-width="${w}"/>`;
const frame = (top, height) => rect(44, top, 1394, 1, '#e4eaef') + rect(44, top + height - 1, 1394, 1, '#e4eaef') + rect(44, top, 1, height, '#e4eaef') + rect(1438, top, 1, height, '#e4eaef');
const vlines = (lines, top, height) => Object.keys(lines).map(x => rect(x, top, 1, height, '#eceff2')).join('');

// label pinned to a chart position
function mark(parent, x, top, text, cls) {
    const el = document.createElement('span');
    el.className = 'mark ' + (cls || '');
    el.textContent = text;
    el.style.left = (x - X0) / WIDTH * 100 + '%';
    el.style.top = top + 'px';
    parent.appendChild(el);
}

function arrowHead(x, y, angle) {
    return `<path d="M0 0l-14-6v12z" transform="translate(${x} ${y}) rotate(${angle})"/>`;
}

function drawPrice() {
    let s = vlines(monthLines, 67, 593);
    for (let k = 0; k < 22; k++) s += rect(44, 88 + 26 * k, 1394, 1, '#eceff2');
    s += frame(67, 593);

    notices.forEach(n => {
        const [a, b] = Array.isArray(n) ? n : [n, n];
        for (let i = a; i <= b; i++) s += `<path d="M${barX(i) + .5} 69l2.700 2.700-2.700 2.700-2.700-2.700z" fill="#3584d0"/>`;
    });

    candles.forEach(([high, top, bottom, low, fell], i) => {
        const x = barX(i), h = Math.max(bottom - top, 2);
        if (fell) {
            s += rect(x, high, 1, low - high, '#219410') + rect(x - 2, top, 5, h, '#219410');
        } else {
            s += rect(x, high, 1, Math.max(top - high, 0), '#b02a30') + rect(x, bottom, 1, Math.max(low - bottom, 0), '#b02a30');
            s += `<rect x="${x - 1.5}" y="${top + .5}" width="4" height="${h}" fill="#fff" stroke="#b02a30" shape-rendering="crispEdges"/>`;
        }
    });

    s += poly(candles.map((c, i) => `${barX(i) + .5},${c[4] ? c[2] : c[1]}`).join(' '), '#8f8f8f');
    s += poly(ma900, '#c678cf') + poly(ma55, '#eb9a48') + poly(ma144, '#3ba3cb');
    s += '<line x1="44" y1="484.5" x2="1438" y2="484.5" stroke="#c2a24c" stroke-dasharray="5 2"/>';
    s += '<path d="M231 251l26-6M1015 640l17 5" stroke="#dfe3e8" fill="none"/>';

    // trend lines, projected path and the two zones
    s += stroke(44, 313, 1438, 507, 2.4) + stroke(898, 660, 1438, 541, 2.4);
    s += stroke(1279, 581, 1350, 440, 2.2) + stroke(1356, 436, 1402, 499, 2.2) + stroke(1406, 505, 1431, 434, 2.2);
    s += arrowHead(1355, 433, -63) + arrowHead(1407, 506, 54) + arrowHead(1435, 425, -70);
    s += '<ellipse cx="1403" cy="432" rx="57" ry="3.500" fill="none" stroke="#000" stroke-width="4"/>';
    s += '<ellipse cx="1369" cy="516" rx="78" ry="3.500" fill="none" stroke="#000" stroke-width="4"/>';
    document.getElementById('priceSvg').innerHTML = s;

    const plot = document.getElementById('pricePlot');
    mark(plot, 665, 122, '日线支撑360元，压力400元', 'note');
    mark(plot, 260, 175, '511.847');
    mark(plot, 1032, 577, '295.400');
    [[138, 'E'], [481, 'E'], [788, 'Q'], [1039, 'E'], [1265, '⋯']].forEach(([x, t]) => mark(plot, x, 584, t, 'event'));
}

function drawAxis() {
    let html = '';
    ['604.423', '589.708', '574.993', '560.277', '545.562', '530.846', '516.131', '501.416', '486.700', '471.985', '457.269',
        '442.554', '427.839', '413.123', '398.408', '383.692', '368.977', '354.262', '339.546', '324.831', '310.115', '295.400']
        .forEach(v => html += `<span>${v}</span>`);
    html += '<span class="price-tag">380.200</span>';
    document.getElementById('axisLeft').innerHTML = html;
    document.getElementById('axisRight').innerHTML = html;
}

function drawMacd() {
    let s = vlines(monthLines, 684, 152);
    [698, 724, 740, 776, 802, 828].forEach(y => s += rect(44, y, 1394, 1, '#eceff2'));
    s += frame(684, 152);
    hist.forEach((h, i) => {
        s += h > 0 ? rect(barX(i), 740, 1, h, '#219410') : rect(barX(i), 740 + h, 1, -h, '#a8262c');
    });
    s += poly(dif, '#e39a48') + poly(dea, '#35a3c6');
    document.getElementById('macdSvg').innerHTML = s;
    const months = document.getElementById('months');
    for (const x in monthLines) mark(months, +x, 10, monthLines[x]);
}

function drawNavigator() {
    const nav = document.getElementById('nav');
    document.getElementById('navSvg').innerHTML = vlines(years, 854, 50)
        + `<polygon points="${history} 1438,904 44,904" fill="#eef2f5"/>`
        + rect(1290, 854, 148, 50, 'rgba(200,208,218,.22)') + frame(854, 50)
        + '<path d="M1297 879h-5M1294 877l-2 2 2 2M1432 879h5M1435 877l2 2-2 2" stroke="#6f8aa5" fill="none"/>';
    for (const x in years) mark(nav, +x, 45, years[x]);
}

function fillStats() {
    // label, value, tone, label width
    const rows = [
        ['最高价', '381.600', 'red'], ['开盘价', '379.400', 'red'], ['成交量', '794.08万'],
        ['最低价', '374.200', 'green'], ['昨收价', '375.000'], ['成交额', '30.08亿'],
        ['振　幅', '1.97%'], ['平均价', '378.799', 'red'], ['市盈率TTM', '14.10', '', 'wider'],
        ['委　比', '-29.76%'], ['总市值', '36583.7亿', 'more'], ['市盈率(静)', '13.30', '', 'wider'],
        ['量　比', '1.09'], ['总股本', '96.22亿'], ['市净率', '3.814'],
        ['52周最高', '586.584', 'red', 'wide'], ['港股市值', '36583.7亿', '', 'wide'], ['换手率', '0.08%'],
        ['52周最低', '295.400', 'green', 'wide'], ['港股股本', '96.22亿', '', 'wide'], ['每　手', '100股'],
        ['历史最高', '749.547', 'red', 'wide'], ['股息TTM', '1.598', '', 'wide'], ['股息率TTM', '0.42%', '', 'wider'],
        ['历史最低', '-7.793', 'green', 'wide'], ['股息LFY', '1.598', '', 'wide'], ['股息率LFY', '0.42%', '', 'wider']
    ];
    document.getElementById('stats').innerHTML = rows.map(([label, value, tone, width]) =>
        `<div><span class="${width || ''}">${label}</span><b class="${tone || ''}">${value}</b>${tone === 'more' ? '<svg class="icon"><use href="#more"/></svg>' : ''}</div>`
    ).join('');
}

function fillDepth() {
    const bids = [['380.200', '300', 2], ['380.000', '42.6K', 33], ['379.800', '35.6K', 20], ['379.600', '52.1K', 21], ['379.400', '8.5K', 7], ['379.200', '11.6K', 19], ['379.000', '9.3K', 12], ['378.800', '6.3K', 14], ['378.600', '2.2K', 4], ['378.400', '11.2K', 12]];
    const asks = [['380.400', '6.7K', 4], ['380.600', '18.1K', 9], ['380.800', '22.5K', 18], ['381.000', '44K', 25], ['381.200', '27K', 17], ['381.400', '26.3K', 14], ['381.600', '20.4K', 15], ['381.800', '50.5K', 21], ['382.000', '86.1K', 36], ['382.200', '30.6K', 12]];
    const row = ([price, qty, n], i) => `<tr><td><i>${i + 1}</i></td><td class="p">${price}</td><td>${qty}(</td><td>${n})</td></tr>`;
    document.getElementById('bids').innerHTML = bids.map(row).join('');
    document.getElementById('asks').innerHTML = asks.map(row).join('');
}

drawPrice();
drawAxis();
drawMacd();
drawNavigator();
fillStats();
fillDepth();
```
